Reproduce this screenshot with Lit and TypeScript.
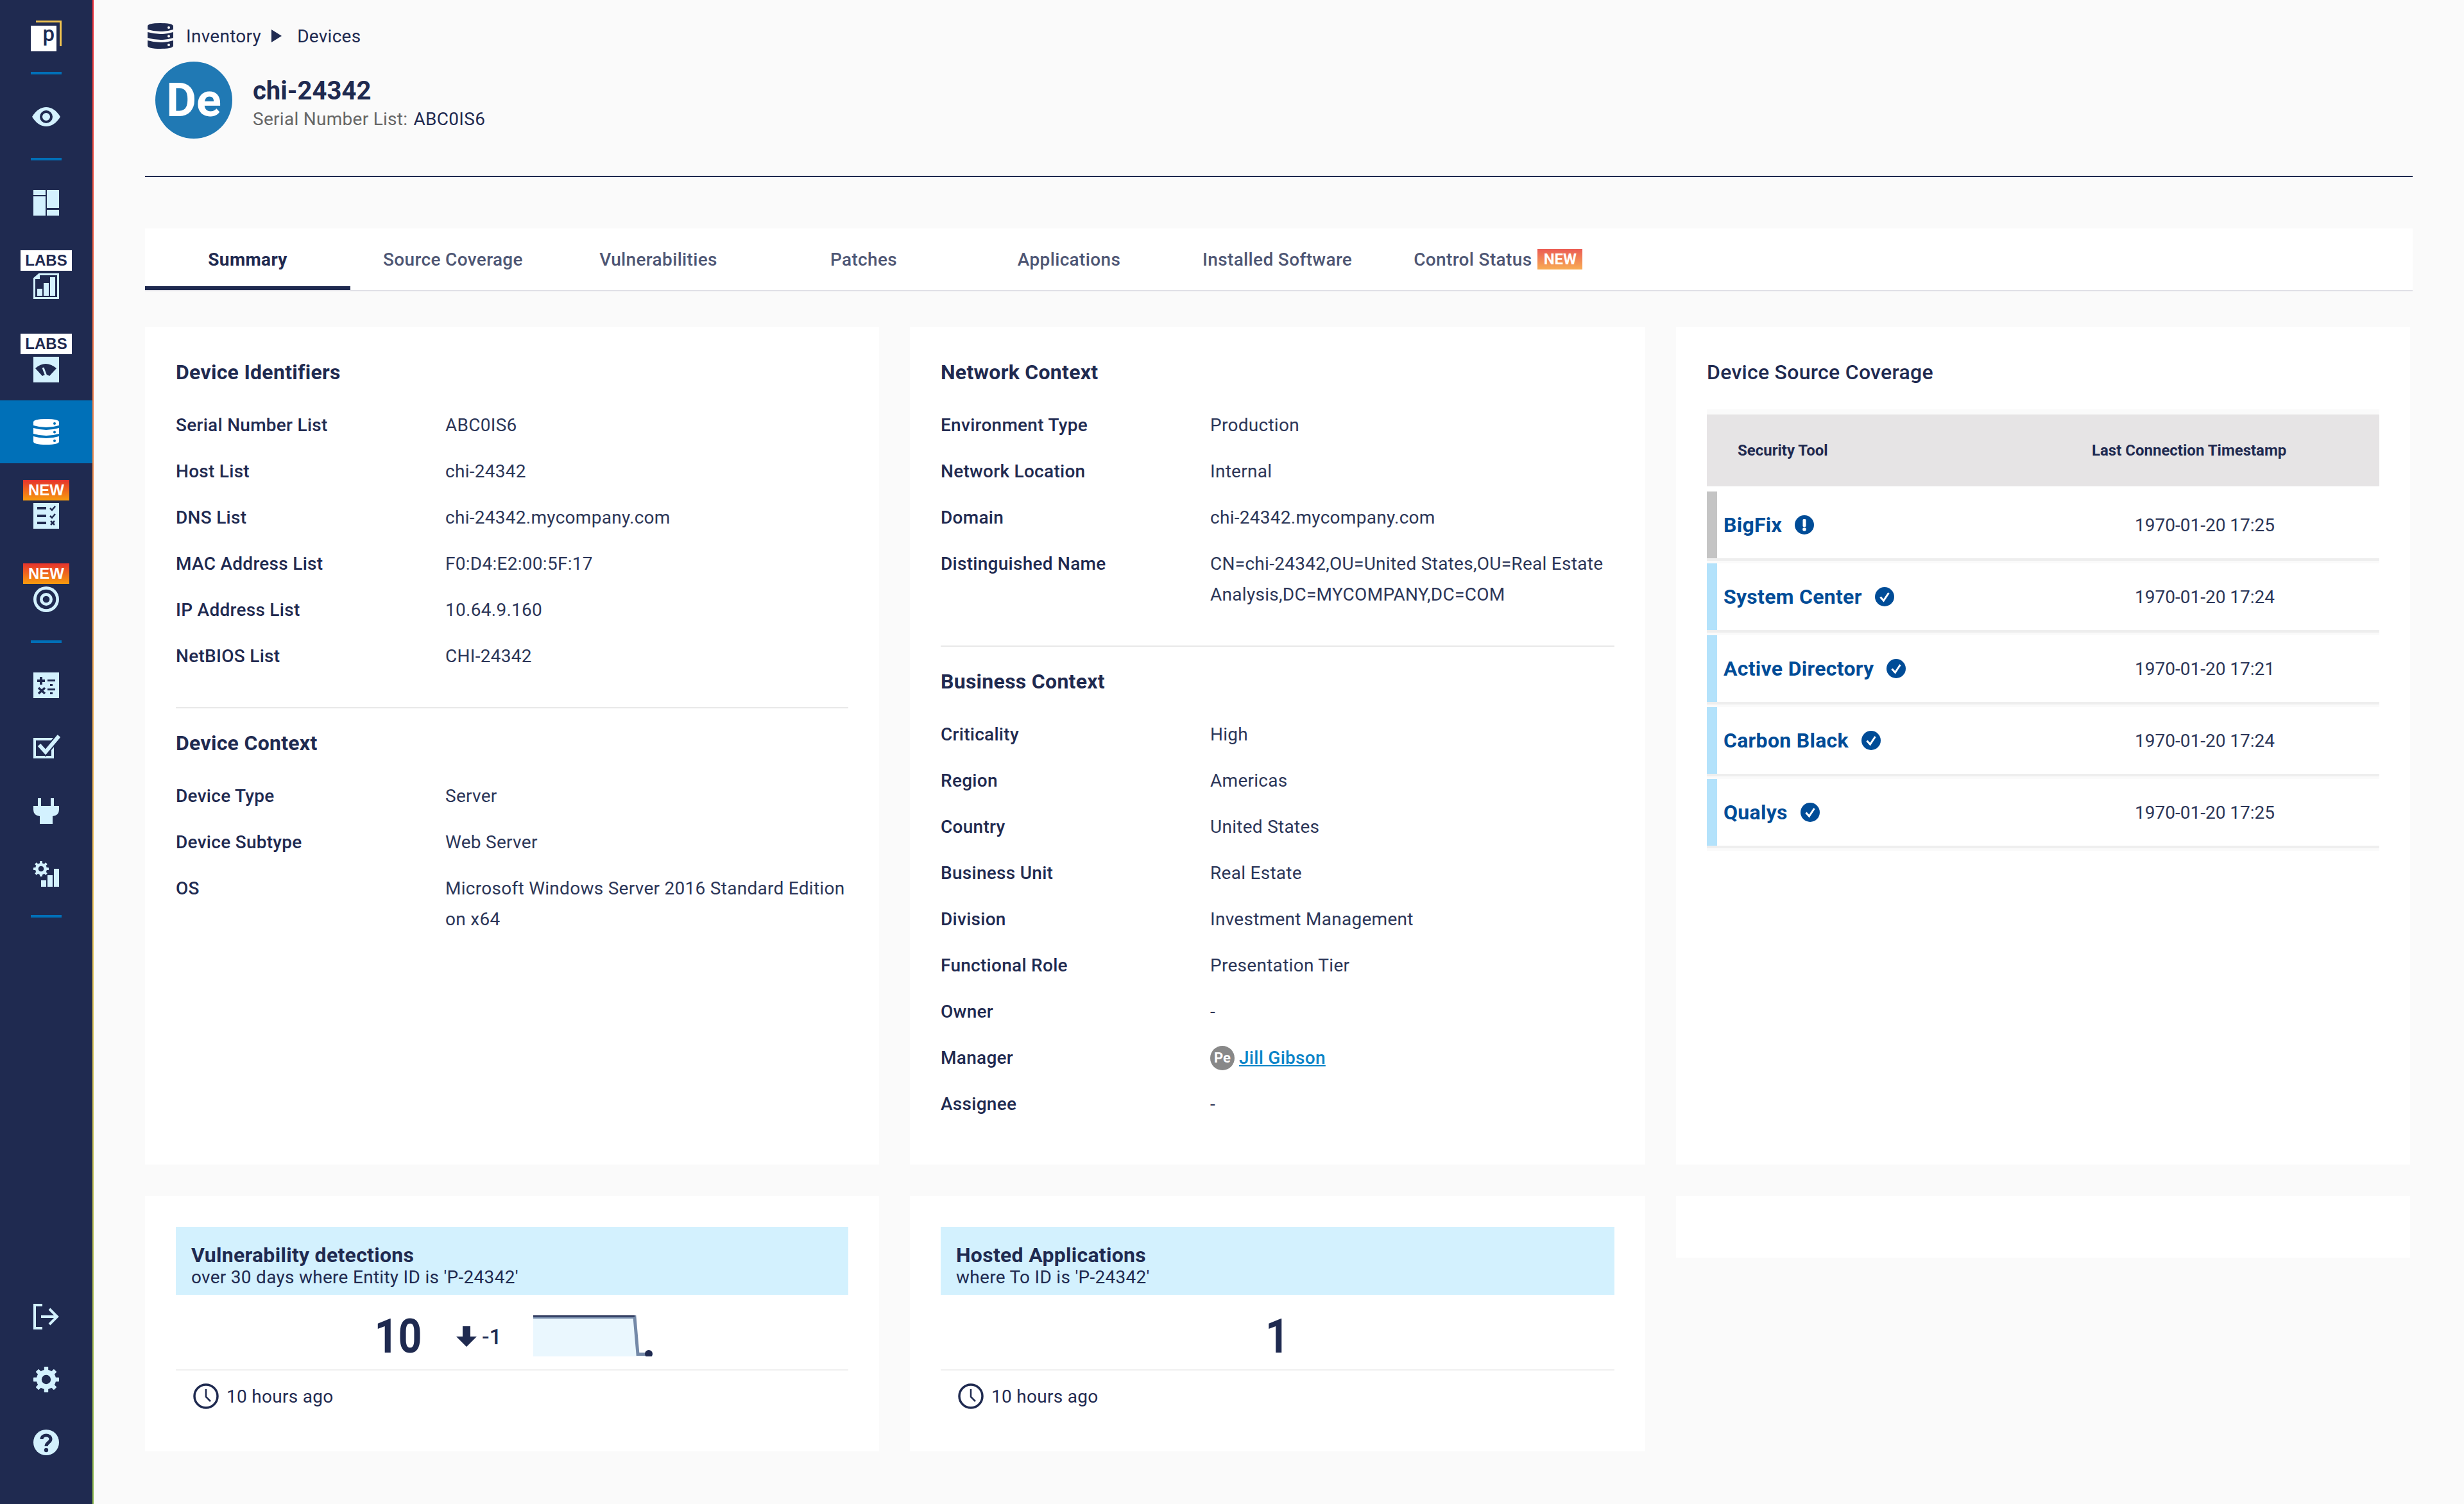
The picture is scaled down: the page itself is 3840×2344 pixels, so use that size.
import { LitElement, html, css, svg } from "lit";
import { customElement } from "lit/decorators.js";

const NAVY = "#1f2a50";
const LIGHT = "#d3f1fe";

const gear = (cx: number, cy: number, r: number, fill: string, hole: string) => {
  const teeth = [0, 45, 90, 135, 180, 225, 270, 315];
  const w = r * 0.32;
  return svg`<g>
    ${teeth.map(
      (a) => svg`<rect x=${cx - w / 2} y=${cy - r} width=${w} height=${r * 0.5} rx=${r * 0.04} fill=${fill} transform="rotate(${a} ${cx} ${cy})"></rect>`
    )}
    <circle cx=${cx} cy=${cy} r=${r * 0.76} fill=${fill}></circle>
    <circle cx=${cx} cy=${cy} r=${r * 0.36} fill=${hole}></circle>
  </g>`;
};

const dbIcon = (fill: string, dot: string) => html`<svg class="i40" viewBox="0 0 40 40">
  <path fill=${fill} d="M0 5Q0 0 20 0T40 5V10Q30 13 20 13T0 10Z"></path>
  <path fill=${fill} d="M0 14Q10 17 20 17T40 14V23Q30 26 20 26T0 23Z"></path>
  <path fill=${fill} d="M0 27Q10 30 20 30T40 27V35Q40 40 20 40T0 35Z"></path>
  <circle cx="33" cy="7" r="2" fill=${dot}></circle>
  <circle cx="33" cy="20.5" r="2" fill=${dot}></circle>
  <circle cx="33" cy="34" r="2" fill=${dot}></circle>
</svg>`;

const checkBadge = html`<svg class="i30" viewBox="0 0 30 30">
  <circle cx="15" cy="15" r="15" fill="#004c97"></circle>
  <path d="M8.5 15.5L13.5 21L21.5 9" fill="none" stroke="#fff" stroke-width="3"></path>
</svg>`;
const alertBadge = html`<svg class="i30" viewBox="0 0 30 30">
  <circle cx="15" cy="15" r="15" fill="#004c97"></circle>
  <rect x="12.5" y="6" width="5" height="12" rx="1.5" fill="#fff"></rect>
  <circle cx="15" cy="22" r="2.8" fill="#fff"></circle>
</svg>`;
const clock = html`<svg class="i40" viewBox="0 0 40 40">
  <circle cx="20" cy="20" r="18" fill="none" stroke=${NAVY} stroke-width="3.5"></circle>
  <path d="M20 9V21L27 28" fill="none" stroke=${NAVY} stroke-width="2.5"></path>
</svg>`;

const identifiers: [string, string][] = [
  ["Serial Number List", "ABC0IS6"],
  ["Host List", "chi-24342"],
  ["DNS List", "chi-24342.mycompany.com"],
  ["MAC Address List", "F0:D4:E2:00:5F:17"],
  ["IP Address List", "10.64.9.160"],
  ["NetBIOS List", "CHI-24342"],
];
const deviceContext: [string, string][] = [
  ["Device Type", "Server"],
  ["Device Subtype", "Web Server"],
  ["OS", "Microsoft Windows Server 2016 Standard Edition on x64"],
];
const network: [string, string][] = [
  ["Environment Type", "Production"],
  ["Network Location", "Internal"],
  ["Domain", "chi-24342.mycompany.com"],
  ["Distinguished Name", "CN=chi-24342,OU=United States,OU=Real Estate Analysis,DC=MYCOMPANY,DC=COM"],
];
const business: [string, string][] = [
  ["Criticality", "High"],
  ["Region", "Americas"],
  ["Country", "United States"],
  ["Business Unit", "Real Estate"],
  ["Division", "Investment Management"],
  ["Functional Role", "Presentation Tier"],
  ["Owner", "-"],
];
const tools: { name: string; ok: boolean; time: string }[] = [
  { name: "BigFix", ok: false, time: "1970-01-20 17:25" },
  { name: "System Center", ok: true, time: "1970-01-20 17:24" },
  { name: "Active Directory", ok: true, time: "1970-01-20 17:21" },
  { name: "Carbon Black", ok: true, time: "1970-01-20 17:24" },
  { name: "Qualys", ok: true, time: "1970-01-20 17:25" },
];
const tabs = ["Summary", "Source Coverage", "Vulnerabilities", "Patches", "Applications", "Installed Software"];

@customElement("app-root")
export class AppRoot extends LitElement {
  static styles = css`
    :host {
      display: flex;
      min-height: 2344px;
      width: 3840px;
      background: #fafafa;
      font-family: Roboto, sans-serif;
      color: #1f2a50;
      font-size: 28px;
      letter-spacing: 0.28px;
    }
    * { box-sizing: border-box; }
    svg { display: block; flex: none; }
    .i40 { width: 40px; height: 40px; }
    .i30 { width: 30px; height: 30px; }

    /* sidebar */
    .side {
      width: 146px;
      flex: none;
      background: #1f2a50;
      border-right: 2px solid;
      border-image: linear-gradient(180deg, #ee2e3a 0%, #f39a50 35%, #f0c75a 60%, #8fbd4f 100%) 1;
      display: flex;
      flex-direction: column;
      align-items: center;
      padding-top: 32px;
    }
    .logo { width: 48px; height: 48px; }
    .eye { width: 48px; height: 40px; }
    .sep { width: 48px; height: 4px; background: #0070b8; margin: 44px 0 46px; flex: none; }
    .sep.first { margin-top: 32px; }
    .badge-item { display: flex; flex-direction: column; align-items: center; gap: 4px; margin-top: 54px; }
    .badge-item.after-active { margin-top: 26px; }
    .labs, .newb {
      height: 32px;
      display: flex;
      align-items: center;
      justify-content: center;
      font-family: "Liberation Sans", sans-serif;
      font-weight: 700;
      font-size: 24px;
      letter-spacing: 0;
    }
    .labs { width: 80px; background: #fff; color: #1f2a50; }
    .newb { width: 72px; color: #fff; background: linear-gradient(180deg, #e5322d, #f89c0e); }
    .active {
      align-self: stretch;
      height: 98px;
      background: #0070b8;
      margin-top: 28px;
      display: flex;
      align-items: center;
      justify-content: center;
    }
    .tool-icon { margin-top: 58px; }
    .tool-icon.check { margin-top: 54px; width: 42px; margin-left: 2px; margin-bottom: 4px; }
    .bottom { margin-top: auto; display: flex; flex-direction: column; gap: 58px; padding-bottom: 76px; }

    /* main */
    .main { flex: 1; padding: 36px 80px 0; min-width: 0; }
    .crumb { display: flex; align-items: center; height: 40px; padding-left: 4px; }
    .crumb .lnk { margin-left: 20px; }
    .crumb .tri { width: 16px; height: 20px; margin: 0 24px 0 16px; }
    .head { display: flex; align-items: center; gap: 32px; margin-top: 20px; padding-left: 16px; }
    .avatar {
      width: 120px; height: 120px; border-radius: 50%;
      background: #2079b4; color: #fff;
      display: flex; align-items: center; justify-content: center;
      font-size: 72px; font-weight: 700; letter-spacing: 0;
    }
    .title { font-size: 40px; font-weight: 700; line-height: 48px; margin-top: 8px; letter-spacing: 0; }
    .sub { line-height: 32px; color: #666; margin-top: 4px; }
    .sub b { font-weight: 400; color: #1f2a50; margin-left: 2px; }
    .rule { height: 2px; background: #1f2a50; margin-top: 58px; }

    .tabs {
      display: flex;
      background: #fff;
      height: 98px;
      margin-top: 80px;
      border-bottom: 2px solid #e0e0e6;
    }
    .tab {
      min-width: 320px;
      padding: 0 48px;
      height: 96px;
      display: flex;
      align-items: center;
      justify-content: center;
      gap: 9px;
      font-weight: 500;
      color: #4e5674;
      letter-spacing: 0.35px;
    }
    .tab.on { color: #1f2a50; font-weight: 700; border-bottom: 6px solid #1f2a50; padding-top: 6px; }
    .tab.last { min-width: 0; padding-right: 0; }
    .tbadge {
      width: 70px; height: 32px;
      background: linear-gradient(180deg, #eb5c55, #f8ac54);
      color: #fff; font-weight: 700; font-size: 24px; letter-spacing: 0;
      display: flex; align-items: center; justify-content: center;
    }

    .grid {
      display: grid;
      grid-template-columns: 1144px 1146px 1144px;
      column-gap: 48px;
      row-gap: 49px;
      margin-top: 56px;
      align-items: stretch;
      padding-bottom: 82px;
    }
    .card { background: #fff; padding: 50px 48px 0; }
    .card.tall { height: 1305px; }
    .card-title { font-size: 32px; font-weight: 700; line-height: 40px; margin-bottom: 26px; }
    .card-title.plain { font-weight: 500; margin-bottom: 46px; }
    .row { display: grid; grid-template-columns: 420px 1fr; line-height: 48px; padding: 13px 0 11px; }
    .row .k { font-weight: 500; }
    .row .v { color: #2c3658; }
    .div { height: 2px; background: #e8e8e8; margin: 44px 0 34px; }
    .mgr { display: flex; align-items: center; gap: 7px; }
    .pe {
      width: 38px; height: 38px; border-radius: 50%;
      background: #888; color: #fff; font-size: 22px; font-weight: 700; letter-spacing: 0;
      display: flex; align-items: center; justify-content: center;
    }
    a { color: #0a84c8; font-weight: 500; text-decoration: underline; }

    .thead {
      height: 112px;
      margin-bottom: 8px;
      background: #e6e4e5;
      display: grid;
      grid-template-columns: 600px 1fr;
      align-items: center;
      font-size: 24px;
      font-weight: 700;
      letter-spacing: 0;
      box-shadow: 0 -8px 0 #fafafa;
    }
    .thead .a { padding-left: 48px; }
    .trow {
      margin-top: 4px;
      height: 108px;
      background: #fff;
      border-bottom: 4px solid #eee;
      display: grid;
      grid-template-columns: 667px 1fr;
      align-items: center;
      box-shadow: 0 4px 0 #fafafa;
    }
    .thead + .trow { margin-top: 0; }
    .trow .tname {
      height: 100%;
      display: flex; align-items: center; gap: 20px;
      border-left: 16px solid #b3e2fb;
      padding-left: 10px;
      font-size: 32px; font-weight: 700; color: #004c97;
    }
    .trow .when { color: #2c3658; letter-spacing: 0; }
    .trow.warn .tname { border-left-color: #c4c4c4; }

    .widget { padding: 48px 48px 0; height: 398px; }
    .w-head { height: 106px; background: #d3f1fe; padding: 26px 24px 0; }
    .w-title { font-size: 32px; font-weight: 700; line-height: 36px; }
    .w-sub { line-height: 34px; }
    .w-val {
      height: 118px;
      padding-top: 12px;
      display: flex;
      align-items: center;
      justify-content: center;
      border-bottom: 2px solid #f0f0f0;
    }
    .big { font-size: 75px; font-weight: 700; line-height: 72px; letter-spacing: 0; transform: scaleX(0.86); }
    .big.pair { width: 80px; text-align: center; }
    .delta { width: 70px; display: flex; align-items: center; gap: 8px; margin: 2px 50px 0 53px; font-size: 34px; font-weight: 500; letter-spacing: 0; }
    .spark { width: 187px; height: 64px; overflow: hidden; }
    .w-foot { display: flex; align-items: center; gap: 12px; margin-top: 20px; padding-left: 27px; }
    .empty { height: 96px; }
  `;

  private rows(list: [string, string][]) {
    return list.map(([k, v]) => html`<div class="row"><div class="k">${k}</div><div class="v">${v}</div></div>`);
  }

  private sidebar() {
    return html`<nav class="side">
      <svg class="logo" viewBox="0 0 48 48">
        <path d="M8 1.5H46.5V40" fill="none" stroke="#f0c350" stroke-width="3"></path>
        <rect x="0" y="8" width="40" height="40" fill="#fff"></rect>
        <text x="28" y="32" font-family="Roboto" font-size="33" font-weight="500" text-anchor="middle" fill=${NAVY}>p</text>
      </svg>
      <div class="sep first"></div>
      <svg class="eye" viewBox="0 0 48 40">
        <path d="M2 20C14 0 34 0 46 20C34 40 14 40 2 20Z" fill=${LIGHT}></path>
        <circle cx="24" cy="20" r="8" fill=${LIGHT} stroke=${NAVY} stroke-width="4"></circle>
      </svg>
      <div class="sep"></div>
      <svg class="i40" viewBox="0 0 40 40">
        <g fill=${LIGHT}>
          <rect x="0" y="0" width="19" height="8"></rect>
          <rect x="0" y="10" width="19" height="30"></rect>
          <rect x="21" y="0" width="19" height="28"></rect>
          <rect x="21" y="31" width="19" height="9"></rect>
        </g>
      </svg>
      <div class="badge-item">
        <div class="labs">LABS</div>
        <svg class="i40" viewBox="0 0 40 40">
          <path d="M9 1.5H38.5V38.5H1.5V8Z" fill="none" stroke=${LIGHT} stroke-width="3"></path>
          <path d="M2 9H10V1Z" fill=${LIGHT}></path>
          <rect x="6" y="24" width="8" height="11" fill=${LIGHT}></rect>
          <rect x="16" y="15" width="8" height="20" fill=${LIGHT}></rect>
          <rect x="26" y="6" width="8" height="29" fill=${LIGHT}></rect>
        </svg>
      </div>
      <div class="badge-item">
        <div class="labs">LABS</div>
        <svg class="i40" viewBox="0 0 40 40">
          <rect width="40" height="40" fill=${LIGHT}></rect>
          <path d="M3 18Q19 4 36 18L25 30Q20 26 14 30Z" fill=${NAVY}></path>
          <path d="M15 17L20 30" stroke=${LIGHT} stroke-width="3" fill="none"></path>
        </svg>
      </div>
      <div class="active">${dbIcon("#fff", "#0070b8")}</div>
      <div class="badge-item after-active">
        <div class="newb">NEW</div>
        <svg class="i40" viewBox="0 0 40 40">
          <rect width="40" height="40" fill=${LIGHT}></rect>
          <g fill=${NAVY}>
            <rect x="6" y="6" width="14" height="4"></rect>
            <rect x="6" y="18" width="14" height="4"></rect>
            <rect x="6" y="29" width="14" height="4"></rect>
          </g>
          <g fill="none" stroke=${NAVY} stroke-width="2.5">
            <path d="M26 8L29 11L34 5"></path>
            <path d="M26 20L29 23L34 17"></path>
            <path d="M27 28L33 34M33 28L27 34"></path>
          </g>
        </svg>
      </div>
      <div class="badge-item">
        <div class="newb">NEW</div>
        <svg class="i40" viewBox="0 0 40 40">
          <circle cx="20" cy="20" r="20" fill=${LIGHT}></circle>
          <circle cx="20" cy="20" r="15.3" fill=${NAVY}></circle>
          <circle cx="20" cy="20" r="10" fill=${LIGHT}></circle>
          <circle cx="20" cy="20" r="5.3" fill=${NAVY}></circle>
        </svg>
      </div>
      <div class="sep"></div>
      <svg class="i40" viewBox="0 0 40 40">
        <rect width="40" height="40" fill=${LIGHT}></rect>
        <g fill=${NAVY}>
          <rect x="6" y="11" width="12" height="4"></rect>
          <rect x="10" y="7" width="4" height="12"></rect>
          <rect x="22" y="11" width="12" height="3"></rect>
          <rect x="22" y="25" width="12" height="3"></rect>
          <rect x="26" y="18" width="4" height="3"></rect>
          <rect x="26" y="31" width="4" height="3"></rect>
        </g>
        <path d="M8 24L18 33M18 24L8 33" stroke=${NAVY} stroke-width="3.5" fill="none"></path>
      </svg>
      <svg class="i40 tool-icon check" viewBox="0 0 42 40">
        <rect x="2" y="10" width="28" height="28" fill="none" stroke=${LIGHT} stroke-width="4"></rect>
        <path d="M9 19L19 30L40 5" fill="none" stroke=${NAVY} stroke-width="10"></path>
        <path d="M9 19L19 30L40 5" fill="none" stroke=${LIGHT} stroke-width="6"></path>
      </svg>
      <svg class="i40 tool-icon" viewBox="0 0 40 40">
        <g fill=${LIGHT}>
          <rect x="7" y="0" width="5" height="13"></rect>
          <rect x="27" y="0" width="5" height="13"></rect>
          <path d="M0 12H40V18Q40 27 30 28V40H10V28Q0 27 0 18Z"></path>
        </g>
      </svg>
      <svg class="i40 tool-icon" viewBox="0 0 40 40">
        ${gear(12, 12, 12, LIGHT, NAVY)}
        <g fill=${LIGHT}>
          <rect x="12" y="30" width="8" height="10"></rect>
          <rect x="22" y="22" width="8" height="18"></rect>
          <rect x="32" y="12" width="8" height="28"></rect>
        </g>
      </svg>
      <div class="sep"></div>
      <div class="bottom">
        <svg class="i40" viewBox="0 0 40 40">
          <path d="M14 2H2V38H14" fill="none" stroke=${LIGHT} stroke-width="4"></path>
          <path d="M12 20H37M25 8L37 20L25 32" fill="none" stroke=${LIGHT} stroke-width="4"></path>
        </svg>
        <svg class="i40" viewBox="0 0 40 40">${gear(20, 20, 20, LIGHT, NAVY)}</svg>
        <svg class="i40" viewBox="0 0 40 40">
          <circle cx="20" cy="20" r="20" fill=${LIGHT}></circle>
          <path d="M13 15C13 7 27 7 27 15C27 20 20 20 20 26" fill="none" stroke=${NAVY} stroke-width="5"></path>
          <circle cx="20" cy="32" r="3.2" fill=${NAVY}></circle>
        </svg>
      </div>
    </nav>`;
  }

  render() {
    return html`
      ${this.sidebar()}
      <main class="main">
        <div class="crumb">
          ${dbIcon(NAVY, "#fafafa")}
          <span class="lnk">Inventory</span>
          <svg class="tri" viewBox="0 0 16 20"><path d="M0 0L16 10L0 20Z" fill=${NAVY}></path></svg>
          <span>Devices</span>
        </div>
        <header class="head">
          <div class="avatar">De</div>
          <div>
            <div class="title">chi-24342</div>
            <div class="sub">Serial Number List: <b>ABC0IS6</b></div>
          </div>
        </header>
        <div class="rule"></div>
        <div class="tabs">
          ${tabs.map((t, i) => html`<div class="tab ${i === 0 ? "on" : ""}">${t}</div>`)}
          <div class="tab last">Control Status <span class="tbadge">NEW</span></div>
        </div>
        <div class="grid">
          <section class="card tall">
            <div class="card-title">Device Identifiers</div>
            ${this.rows(identifiers)}
            <div class="div"></div>
            <div class="card-title">Device Context</div>
            ${this.rows(deviceContext)}
          </section>
          <section class="card tall">
            <div class="card-title">Network Context</div>
            ${this.rows(network)}
            <div class="div"></div>
            <div class="card-title">Business Context</div>
            ${this.rows(business)}
            <div class="row"><div class="k">Manager</div>
              <div class="v mgr"><span class="pe">Pe</span><a>Jill Gibson</a></div></div>
            <div class="row"><div class="k">Assignee</div><div class="v">-</div></div>
          </section>
          <section class="card tall">
            <div class="card-title plain">Device Source Coverage</div>
            <div class="thead"><div class="a">Security Tool</div><div class="b">Last Connection Timestamp</div></div>
            ${tools.map(
              (t) => html`<div class="trow ${t.ok ? "" : "warn"}">
                <div class="tname">${t.name} ${t.ok ? checkBadge : alertBadge}</div>
                <div class="when">${t.time}</div>
              </div>`
            )}
          </section>
          <section class="card widget">
            <div class="w-head">
              <div class="w-title">Vulnerability detections</div>
              <div class="w-sub">over 30 days where Entity ID is 'P-24342'</div>
            </div>
            <div class="w-val">
              <span class="big pair">10</span>
              <span class="delta">
                <svg width="32" height="32" viewBox="0 0 32 32"><path d="M10 0H22V16H32L16 32L0 16H10Z" fill=${NAVY}></path></svg>
                -1
              </span>
              <svg class="spark" viewBox="0 0 187 64">
                <path d="M0 2H158L164 60H187V64H0Z" fill="#eaf7fe"></path>
                <path d="M0 2.5H158L163 60.5H180" fill="none" stroke="#7489a8" stroke-width="5"></path>
                <path d="M0 1H158" stroke=${NAVY} stroke-width="2"></path>
                <circle cx="180" cy="60" r="6" fill=${NAVY}></circle>
              </svg>
            </div>
            <div class="w-foot">${clock}<span>10 hours ago</span></div>
          </section>
          <section class="card widget">
            <div class="w-head">
              <div class="w-title">Hosted Applications</div>
              <div class="w-sub">where To ID is 'P-24342'</div>
            </div>
            <div class="w-val"><span class="big">1</span></div>
            <div class="w-foot">${clock}<span>10 hours ago</span></div>
          </section>
          <section class="card empty"></section>
        </div>
      </main>
    `;
  }
}
